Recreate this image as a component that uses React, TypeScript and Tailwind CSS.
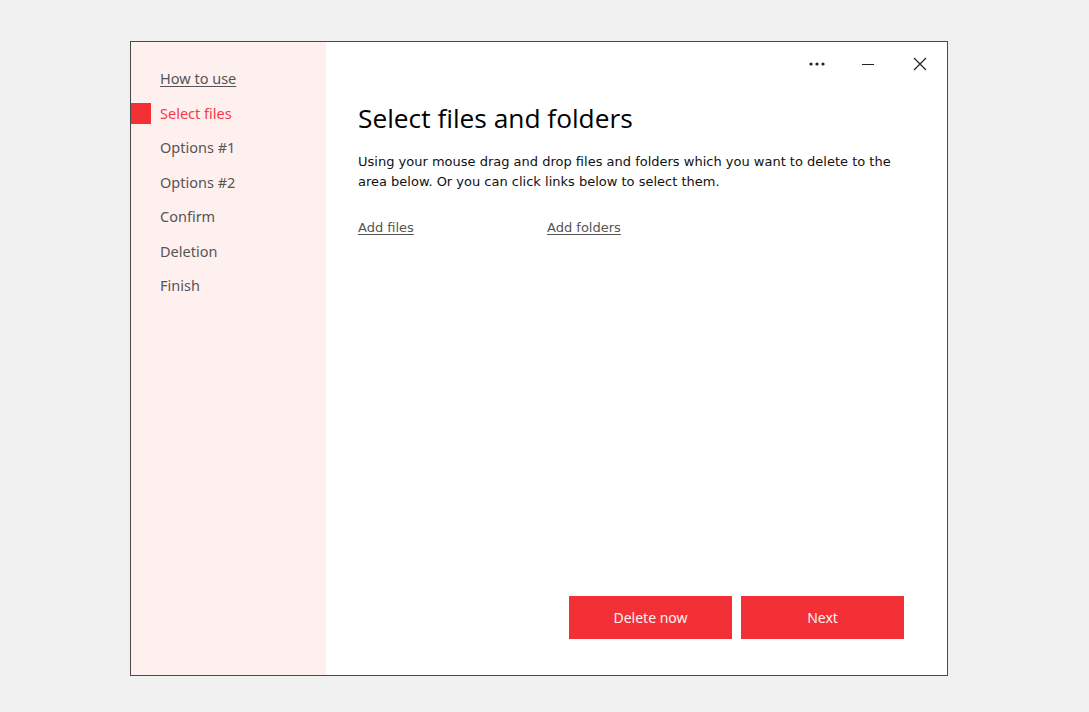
import { useState } from "react";

const steps = [
  "How to use",
  "Select files",
  "Options #1",
  "Options #2",
  "Confirm",
  "Deletion",
  "Finish",
];

const App = () => {
  const [active] = useState(1);

  return (
    <div className="min-h-[712px] w-full bg-[#f0f0f0] pt-[41px] pl-[130px]">
      <div className="flex h-[635px] w-[818px] border border-[#4a4a4a] bg-white">
        {/* sidebar */}
        <div className="flex w-[195px] flex-col bg-[#fff0f0] pt-[20px] font-['Noto_Sans',sans-serif] text-[14.5px]">
          {steps.map((step, i) => (
            <div key={step} className="flex h-[34.5px] items-center">
              <div
                className={
                  i === active
                    ? "h-[21px] w-[20px] bg-[#f33036]"
                    : "h-[21px] w-[20px]"
                }
              />
              <span
                className={
                  i === 0
                    ? "ml-[9px] text-[#555] underline underline-offset-2"
                    : i === active
                      ? "ml-[9px] text-[#f33a45]"
                      : "ml-[9px] text-[#555]"
                }
              >
                {step}
              </span>
            </div>
          ))}
        </div>

        {/* main */}
        <div className="flex flex-1 flex-col">
          <div className="flex h-[46px] items-center justify-end pr-[1px] pb-[3px]">
            <div className="flex w-[50px] justify-center">
              <svg width="18" height="6" viewBox="0 0 18 6">
                <circle cx="3" cy="3" r="1.6" fill="#222" />
                <circle cx="9" cy="3" r="1.6" fill="#222" />
                <circle cx="15" cy="3" r="1.6" fill="#222" />
              </svg>
            </div>
            <div className="flex w-[52px] justify-center">
              <svg width="14" height="14" viewBox="0 0 14 14">
                <path d="M1 7.5H13" stroke="#222" strokeWidth="1" />
              </svg>
            </div>
            <div className="flex w-[52px] justify-center">
              <svg width="14" height="14" viewBox="0 0 14 14">
                <path d="M1 1L13 13M13 1L1 13" stroke="#222" strokeWidth="1.2" />
              </svg>
            </div>
          </div>

          <div className="flex flex-1 flex-col pl-[32px] pr-[43px]">
            <h1 className="mt-[10px] font-['Open_Sans',sans-serif] text-[26.3px] leading-[40px] text-black">
              Select files and folders
            </h1>
            <p className="mt-[14px] font-['DejaVu_Sans',sans-serif] text-[13px] leading-[20px] text-[#111]">
              Using your mouse drag and drop files and folders which you want to
              delete to the area below. Or you can click links below to select
              them.
            </p>
            <div className="mt-[26px] flex font-['DejaVu_Sans',sans-serif] text-[13px] text-[#555]">
              <span className="w-[189px] underline underline-offset-2">
                Add files
              </span>
              <span className="underline underline-offset-2">Add folders</span>
            </div>

            <div className="flex-1" />

            <div className="mb-[36px] flex justify-end gap-[9px] font-['Noto_Sans',sans-serif] text-[14px]">
              <button className="h-[43px] w-[163px] bg-[#f33036] text-[#fff0f0]">
                Delete now
              </button>
              <button className="h-[43px] w-[163px] bg-[#f33036] text-[#fff0f0]">
                Next
              </button>
            </div>
          </div>
        </div>
      </div>
    </div>
  );
};

export default App;
